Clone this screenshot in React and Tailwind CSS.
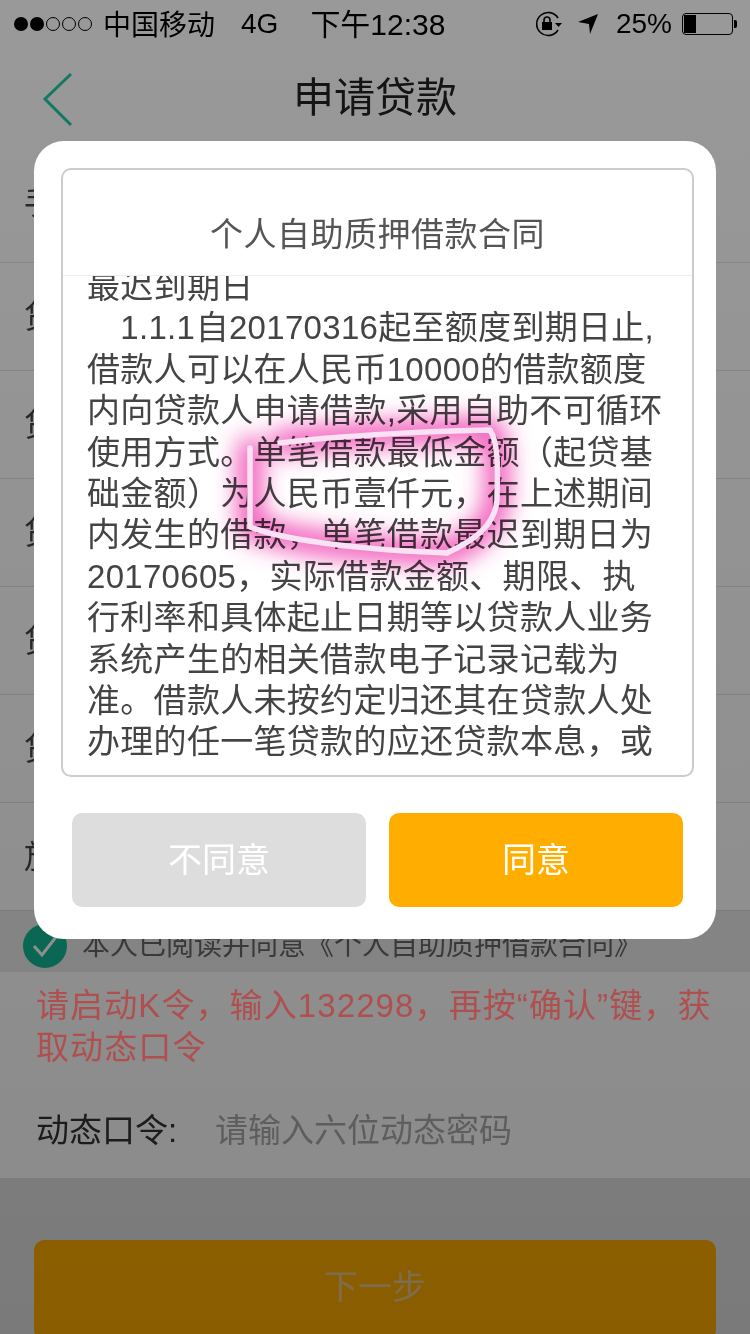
import React from 'react';

const baseFont = "font-['Liberation_Sans','Noto_Sans_CJK_SC',sans-serif]";

const formRows = ['贷款金额', '贷款期限', '贷款用途', '贷款利率', '贷款账户', '放款账户'];

const contractLines = [
  '最迟到期日',
  '\u30001.1.1 自20170316起至额度到期日止,',
  '借款人可以在人民币10000的借款额度',
  '内向贷款人申请借款,采用自助不可循环',
  '使用方式。单笔借款最低金额\uFF08起贷基',
  '础金额\uFF09为人民币壹仟元\uFF0C在上述期间',
  '内发生的借款\uFF0C单笔借款最迟到期日为',
  '20170605\uFF0C实际借款金额、期限、执',
  '行利率和具体起止日期等以贷款人业务',
  '系统产生的相关借款电子记录记载为',
  '准。借款人未按约定归还其在贷款人处',
  '办理的任一笔贷款的应还贷款本息\uFF0C或',
];

const StatusBar = () => (
  <div className="h-[48px] shrink-0 flex items-center pl-[14px] pr-[17px] text-[28px] text-black">
    <div className="flex items-center gap-[2px]">
      <span className="w-[14px] h-[14px] rounded-full bg-black" />
      <span className="w-[14px] h-[14px] rounded-full bg-black" />
      <span className="w-[14px] h-[14px] rounded-full border border-black" />
      <span className="w-[14px] h-[14px] rounded-full border border-black" />
      <span className="w-[14px] h-[14px] rounded-full border border-black" />
    </div>
    <span className="ml-[11px] pt-[3px]">中国移动</span>
    <span className="ml-[26px]">4G</span>
    <span className="ml-[32px] text-[30px]">下午12:38</span>
    <div className="ml-auto flex items-center">
      <svg width="30" height="26" viewBox="0 0 30 26" fill="none" stroke="black" strokeWidth="1.6">
        <path d="M24 7a11.5 11.5 0 1 0 0 12" />
        <path d="M21 12l7 0-3.5 4z" fill="black" stroke="none" />
        <rect x="8" y="11" width="10" height="8" fill="black" stroke="none" />
        <path d="M10 11V9a3 3 0 0 1 6 0v2" />
      </svg>
      <svg className="ml-[13px]" width="22" height="22" viewBox="0 0 22 22" fill="black">
        <path d="M21 1L1 9l11 2 1 10z" />
      </svg>
      <span className="ml-[17px]">25%</span>
      <div className="ml-[10px] w-[51px] h-[22px] rounded-[4px] border border-black p-[1px] relative">
        <div className="w-[12px] h-full bg-black" />
        <span className="absolute -right-[5px] top-[6px] w-[3px] h-[8px] bg-black rounded-r-[2px]" />
      </div>
    </div>
  </div>
);

const Page = () => (
  <div className="w-full h-full flex flex-col bg-white">
    <StatusBar />
    <div className="h-[96px] shrink-0 relative flex items-center justify-center pt-[5px] text-[41px] text-[#222]">
      <svg className="absolute left-[40px] top-[24px]" width="36" height="56" viewBox="0 0 36 56" fill="none" stroke="#1fcba3" strokeWidth="3">
        <path d="M31 2L5 27l26 26" />
      </svg>
      申请贷款
    </div>
    <div className="h-[118px] shrink-0 flex items-center pl-[24px] text-[32px] text-[#444]">手机号码</div>
    {formRows.map((label) => (
      <div key={label} className="h-[108px] shrink-0 flex items-center pl-[24px] text-[32px] text-[#444] border-t border-[#e3e3e3]">
        {label}
      </div>
    ))}
    <div className="h-[62px] shrink-0 flex items-center pl-[23px] pt-[9px] gap-[15px] bg-[#ececec] border-t border-[#dddddd] text-[28px] text-[#666]">
      <div className="w-[44px] h-[44px] rounded-full bg-[#12b896] flex items-center justify-center">
        <svg width="28" height="24" viewBox="0 0 28 24" fill="none" stroke="white" strokeWidth="3">
          <path d="M3 12l8 9L25 3" />
        </svg>
      </div>
      本人已阅读并同意《个人自助质押借款合同》
    </div>
    <div className="h-[206px] shrink-0 bg-white">
      <p className="relative z-10 pt-[13px] pl-[36px] text-[33px] leading-[42px] tracking-[1.1px] text-[#b04f4f] whitespace-pre">
        {'请启动K令\uFF0C输入132298\uFF0C再按“确认”键\uFF0C获\n取动态口令'}
      </p>
      <div className="mt-[22px] pl-[36px] h-[80px] flex items-center text-[33px] text-[#333]">
        <span className="w-[179px]">动态口令:</span>
        <span className="text-[#aaaaaa]">请输入六位动态密码</span>
      </div>
    </div>
    <div className="flex-1 bg-[#e2e2e2] px-[34px] pt-[62px]">
      <div className="h-[100px] rounded-[10px] bg-[#ffae00] flex justify-center pt-[22px] text-[34px] text-[#e8c98a]">
        下一步
      </div>
    </div>
  </div>
);

const Highlight = () => (
  <svg className="absolute inset-0 pointer-events-none" width="750" height="1334" viewBox="0 0 750 1334" fill="none">
    <defs>
      <filter id="glow" x="-30%" y="-30%" width="160%" height="160%">
        <feGaussianBlur stdDeviation="12" />
      </filter>
    </defs>
    <g className="mix-blend-multiply" stroke="#f040b0" strokeWidth="22" strokeLinecap="round" strokeLinejoin="round" filter="url(#glow)">
      <path d="M280 443C330 437 400 432 490 430C500 445 497 480 497 500C495 525 475 540 447 553" />
      <path d="M250 448L250 527C290 542 370 550 447 553" />
    </g>
    <g stroke="#f9e2f3" strokeWidth="5.5" strokeLinecap="round" strokeLinejoin="round">
      <path d="M280 443C330 437 400 432 490 430C500 445 497 480 497 500C495 525 475 540 447 553" />
      <path d="M250 448L250 527C290 542 370 550 447 553" />
    </g>
  </svg>
);

const ContractModal = () => (
  <div className="absolute left-[34px] top-[141px] w-[682px] h-[798px] bg-white rounded-[30px] pt-[27px] pl-[27px] pr-[22px]">
    <div className="h-[609px] border-2 border-[#cccccc] rounded-[10px] flex flex-col overflow-hidden">
      <div className="h-[106px] shrink-0 flex items-end justify-center pb-[16px] border-b border-[#eeeeee] text-[33px] tracking-[0.5px] text-[#555]">
        个人自助质押借款合同
      </div>
      <div className="flex-1 overflow-hidden pl-[24px] text-[33px] leading-[41.4px] text-[#444] tracking-[0.3px] [word-spacing:-9px] whitespace-pre">
        {contractLines.map((line) => (
          <div key={line} className="first:-mt-[10px]">{line}</div>
        ))}
      </div>
    </div>
    <div className="mt-[36px] ml-[11px] flex gap-[23px]">
      <div className="w-[294px] h-[94px] rounded-[10px] bg-[#dddddd] flex items-center justify-center text-[34px] text-white">不同意</div>
      <div className="w-[294px] h-[94px] rounded-[10px] bg-[#ffae00] flex items-center justify-center text-[34px] text-white">同意</div>
    </div>
  </div>
);

export default function App() {
  return (
    <div className={`relative w-[750px] h-[1334px] overflow-hidden blur-[0.5px] ${baseFont}`}>
      <Page />
      <div className="absolute inset-0 bg-gradient-to-b from-black/40 to-black/46" />
      <ContractModal />
      <Highlight />
    </div>
  );
}
